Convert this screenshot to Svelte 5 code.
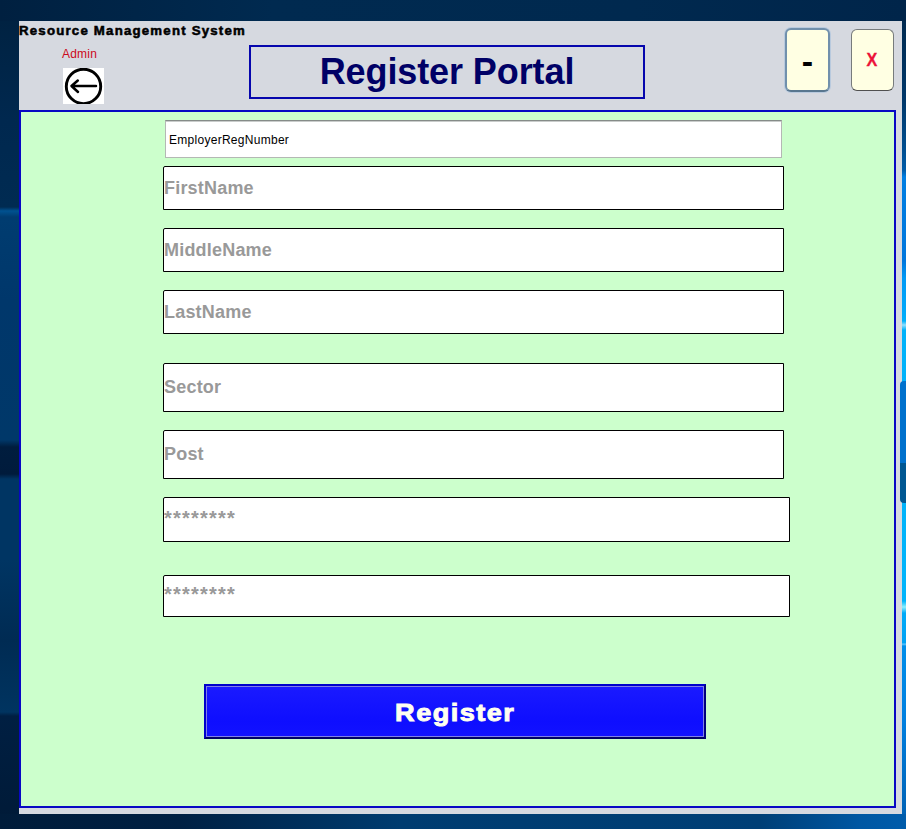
<script>
  const names = [
    { label: 'FirstName', height: 44, gap: 8 },
    { label: 'MiddleName', height: 44, gap: 18 },
    { label: 'LastName', height: 44, gap: 18 },
    { label: 'Sector', height: 49, gap: 29 },
    { label: 'Post', height: 49, gap: 18 }
  ];
</script>

<div class="desktop">
  <div class="sky"></div>
  <main class="window">
    <header>
      <div class="left">
        <div class="app-name">Resource Management System</div>
        <div class="admin">Admin</div>
        <button class="back" aria-label="Back">
          <svg width="41" height="36" viewBox="0 0 41 36">
            <circle cx="20.5" cy="18.4" r="17.2" fill="none" stroke="#000" stroke-width="2.9" />
            <path d="M33 18H9M14.8 12.5L8.5 18L15 24" fill="none" stroke="#000" stroke-width="2.5" stroke-linecap="round" stroke-linejoin="round" />
          </svg>
        </button>
      </div>
      <h1>Register Portal</h1>
      <button class="win min"><span>-</span></button>
      <button class="win close"><span>X</span></button>
    </header>

    <section class="panel">
      <div class="reg"><span>EmployerRegNumber</span></div>
      {#each names as f}
        <div class="field" style="height: {f.height}px; margin-top: {f.gap}px">{f.label}</div>
      {/each}
      <div class="field pass first">********</div>
      <div class="field pass second">********</div>
      <button class="register"><span>Register</span></button>
    </section>
  </main>
  <div class="scroll"></div>
</div>

<style>
  * { box-sizing: border-box; }
  button { padding: 0; margin: 0; font: inherit; }
  .desktop {
    position: relative;
    width: 906px;
    height: 829px;
    overflow: hidden;
    padding: 21px 4px 15px 19px;
    font-family: "Liberation Sans", Arial, sans-serif;
    background:
      linear-gradient(90deg, #001c3a 0, #002043 180px, #003c70 400px, #003f76 760px, #0057a3 860px, #005cab 906px) 0 814px / 906px 15px no-repeat,
      linear-gradient(90deg, #002040, #002a50 30%, #00294f 70%, #00254a) 0 0 / 906px 21px no-repeat,
      linear-gradient(180deg, #00213f 0, #00284f 120px, #002b52 207px, #005291 211px, #003c70 217px, #00376b 300px, #003869 440px, #001d3e 447px, #001b3c 474px, #003563 479px, #003563 560px, #002b53 640px, #003460 712px, #001f42 716px, #001a37 829px);
  }
  .sky {
    position: absolute;
    right: 0;
    top: 21px;
    width: 4px;
    height: 793px;
    background: linear-gradient(180deg, #002a50 0, #00386a 80px, #004f91 130px, #005ba8 149px, #007ee2 156px, #0076dc 240px, #0099f5 257px, #00a8fa 290px, #00b0fa 300px, #8fdfff 304px, #00b2fa 309px, #00b4fb 580px, #8bf0ff 586px, #00aaf8 592px, #00a1f3 622px, #63c9ff 623px, #008eea 625px, #007fdf 700px, #0062b5 793px);
  }
  .scroll {
    position: absolute;
    left: 900px;
    top: 381px;
    width: 10px;
    height: 122px;
    border-radius: 4px;
    background: linear-gradient(180deg, #0071cd 0 82px, #005792 82px);
  }
  .window {
    width: 883px;
    height: 793px;
    background: #d6d9e0;
  }
  header {
    display: flex;
    align-items: flex-start;
    height: 89px;
  }
  .left { width: 230px; flex: none; }
  .app-name {
    height: 20px;
    line-height: 20px;
    font-size: 12px;
    font-weight: 700;
    letter-spacing: 1.1px;
    white-space: nowrap;
    color: #000;
    transform: scaleX(1.102);
    transform-origin: 0 50%;
    -webkit-text-stroke: 0.5px #000;
  }
  .admin {
    height: 27px;
    padding-left: 43px;
    line-height: 26px;
    font-size: 12px;
    letter-spacing: 0.2px;
    color: #cc0a1c;
  }
  .back {
    display: block;
    width: 41px;
    height: 36px;
    margin-left: 44px;
    border: 0;
    background: #fff;
  }
  .back svg { display: block; }
  h1 {
    width: 396px;
    height: 54px;
    margin: 24px 0 0;
    border: 2px solid #0606ad;
    color: #000066;
    font-size: 36px;
    font-weight: 700;
    letter-spacing: -0.1px;
    line-height: 50px;
    text-align: center;
  }
  .win {
    display: flex;
    justify-content: center;
    align-items: center;
    border: 1px solid #777b7c;
    border-radius: 6px;
    background: #ffffe3;
    font-weight: 700;
  }
  .min {
    width: 45px;
    height: 64px;
    margin: 7px 0 0 140px;
    padding-top: 3px;
    border: 2px solid #7190ac;
    border-bottom-color: #58768f;
    font-size: 34px;
    color: #000;
    box-shadow: 0 0 0 1px #b9cade;
  }
  .close {
    width: 43px;
    height: 62px;
    margin: 8px 0 0 21px;
    border-bottom-color: #505050;
    font-size: 18px;
    color: #ec1238;
  }
  .close span { transform: scaleX(0.9); -webkit-text-stroke: 0.3px #ec1238; }
  .panel {
    width: 877px;
    height: 698px;
    padding: 8px 0 0 142px;
    border: 2px solid #0808c4;
    background: #ccffcc;
  }
  .reg {
    width: 617px;
    height: 38px;
    margin-left: 2px;
    padding-left: 3px;
    border: 1px solid #b4b8b4;
    border-top: 1px solid #858b88;
    box-shadow: inset 0 1px #c9cccb;
    background: #fff;
    line-height: 38px;
    font-size: 12px;
    letter-spacing: 0.28px;
    color: #000;
  }
  .field {
    display: flex;
    align-items: center;
    width: 621px;
    border: 1px solid #000;
    border-top-left-radius: 2px;
    background: #fff;
    color: #999;
    font-size: 18px;
    font-weight: 700;
    letter-spacing: 0.2px;
  }
  .pass {
    width: 627px;
    padding-bottom: 3px;
    font-size: 20px;
    letter-spacing: 1.22px;
  }
  .first { height: 45px; margin-top: 18px; }
  .second { height: 42px; margin-top: 33px; padding-bottom: 4px; }
  .register {
    display: block;
    width: 502px;
    height: 55px;
    margin: 67px 0 0 41px;
    padding-top: 2px;
    border: 2px solid #0000cc;
    border-right-color: #000080;
    border-bottom-color: #000066;
    background: linear-gradient(180deg, #1a1aff, #0e0eff 70%, #1212ff);
    box-shadow: inset 0 0 0 1px #8080e8;
    color: #fffff0;
    font-size: 24px;
    font-weight: 700;
    letter-spacing: 1.3px;
    -webkit-text-stroke: 0.9px #fffff0;
  }
  .register span { display: inline-block; transform: scaleX(1.13); }
</style>
